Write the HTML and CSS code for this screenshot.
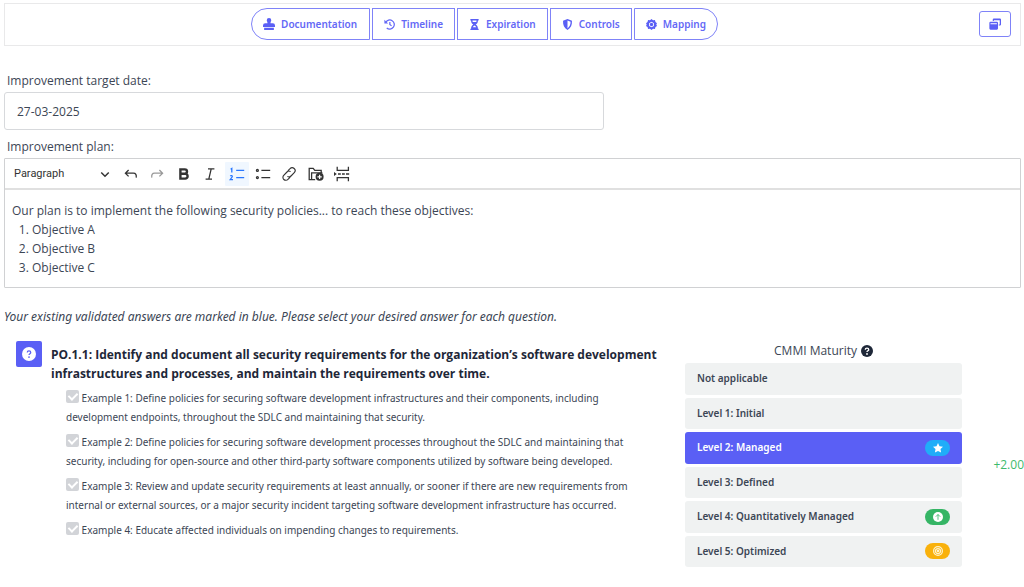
FILE: index.html
```html
<!DOCTYPE html>
<html lang="en">
<head>
<meta charset="utf-8">
<meta name="viewport" content="width=device-width, initial-scale=1">
<title>Improvement plan</title>
<link rel="stylesheet" href="styles.css">
</head>
<body>
<header class="topbar">
  <nav class="tabs" aria-label="Sections">
    <button class="tab" type="button"><svg class="icon" viewBox="0 0 16 16"><path d="M8 0a3 3 0 0 1 3 3c0 1.500-1 2-1 4h3a3 3 0 0 1 3 3v2H0v-2a3 3 0 0 1 3-3h3c0-2-1-2.500-1-4a3 3 0 0 1 3-3zM1.500 13h13v3h-13z"/></svg>Documentation</button>
    <button class="tab" type="button"><svg class="icon line" viewBox="0 0 16 16"><path d="M2.500 5A6.600 6.600 0 1 1 4 13M8.500 4.500V8l2.500 2" stroke-width="1.800"/><path d="M.5 1v5.500H6z" fill="currentColor" stroke="none"/></svg>Timeline</button>
    <button class="tab" type="button"><svg class="icon" viewBox="0 0 16 16"><path fill-rule="evenodd" d="M2 0h12v2h-1c0 3-1 4.500-3.200 6 2.200 1.500 3.200 3 3.200 6h1v2H2v-2h1c0-3 1-4.500 3.200-6C4 6.500 3 5 3 2H2zM5 2c0 1 .2 1.800.6 2.500h4.800C10.800 3.800 11 3 11 2zM8 9.300c-1.200.7-2 1.500-2.500 2.700h5C10 10.800 9.200 10 8 9.300z"/></svg>Expiration</button>
    <button class="tab" type="button"><svg class="icon" viewBox="0 0 16 16"><path fill-rule="evenodd" d="M8 0l6.500 2.700c.3 6-1.500 10.500-6.500 13.300C3 13.200 1.200 8.700 1.500 2.700zm0 2.200v11.500c3.200-2.200 4.500-5.200 4.500-9.600z"/></svg>Controls</button>
    <button class="tab" type="button"><svg class="icon" viewBox="0 0 16 16"><path fill-rule="evenodd" d="M8 0l2.200 1.800 2.800-.3.800 2.700L16 6l-1 2 1 2-2.200 1.800-.8 2.700-2.800-.3L8 16l-2.200-1.800-2.800.3-.8-2.700L0 10l1-2-1-2 2.200-1.800.8-2.700 2.800.3zm0 4L4.500 6v4L8 12l3.500-2V6zm0 1.300L10.300 6.700v2.600L8 10.700 5.700 9.300V6.700z"/></svg>Mapping</button>
  </nav>
  <button class="copy" type="button" aria-label="Show windows"><svg class="icon" viewBox="0 0 16 16"><path fill-rule="evenodd" d="M6.500.5h8A1.500 1.500 0 0 1 16 2v6.500a1.500 1.500 0 0 1-1.500 1.500H13V8.500h1.300V3H6.500v1H5V2A1.500 1.500 0 0 1 6.500.5zM2 5h8.500a1.500 1.500 0 0 1 1.500 1.500v7.500a1.500 1.500 0 0 1-1.500 1.500H2A1.500 1.500 0 0 1 .5 14V6.500A1.500 1.500 0 0 1 2 5zm0 2v1.300h8.500V7z"/></svg></button>
</header>
<main>
  <section class="plan">
    <label class="label" for="target">Improvement target date:</label>
    <input class="date" id="target" type="text" value="27-03-2025">
    <label class="label" for="plan">Improvement plan:</label>
    <div class="editor">
      <div class="toolbar" role="toolbar" aria-label="Editor toolbar">
        <div class="style">
          <select class="style-select" aria-label="Text style"><option>Paragraph</option></select>
          <svg class="chevron" viewBox="0 0 8 8"><path d="M1.500 3l2.500 2.500 2.500-2.500"/></svg>
        </div>
        <div class="tools">
          <button class="tool" type="button" aria-label="Undo"><svg viewBox="0 0 20 20"><path d="M7 5L3 9l4 4M3 9h10c3 0 4 2 3.500 5.500"/></svg></button>
          <button class="tool muted" type="button" aria-label="Redo"><svg viewBox="0 0 20 20"><path d="M13 5l4 4-4 4M17 9H7c-3 0-4 2-3.500 5.500"/></svg></button>
          <button class="tool" type="button" aria-label="Bold"><svg viewBox="0 0 20 20"><path d="M5.500 4.200h5.500a2.700 2.700 0 0 1 0 5.500H5.500zM5.500 9.800h6a2.900 2.900 0 0 1 0 6h-6z" stroke-width="3"/></svg></button>
          <button class="tool" type="button" aria-label="Italic"><svg viewBox="0 0 20 20"><path d="M7.500 3.500h8M4.500 16.500h8M11.500 3.500l-3 13"/></svg></button>
          <button class="tool active" type="button" aria-label="Numbered list"><svg viewBox="0 0 20 20"><path d="M9 5.500h10M9 14.500h10M2 4l1.500-1v5M1.500 12.500c1-1 3-.5 2.500 1L1.500 17h3.500"/></svg></button>
          <button class="tool" type="button" aria-label="Bulleted list"><svg viewBox="0 0 20 20"><path d="M8 5.500h11M8 14.500h11"/><circle cx="3" cy="5.500" r="1.200"/><circle cx="3" cy="14.500" r="1.200"/></svg></button>
          <button class="tool" type="button" aria-label="Link"><svg viewBox="0 0 20 20"><path d="M8.500 6l2.800-2.700a3.600 3.600 0 0 1 5.300 5L12.500 12.500a3.500 3.500 0 0 1-4.500.5M11.500 14l-2.800 2.700a3.600 3.600 0 0 1-5.300-5L7.500 7.500A3.500 3.500 0 0 1 12 7" stroke-width="1.400"/></svg></button>
          <button class="tool" type="button" aria-label="Insert file"><svg viewBox="0 0 20 20"><path d="M9 17H1.500V3h5l2 2.500h8V8M4.500 17V8.500H18"/><circle cx="14.500" cy="13.500" r="5" fill="currentColor" stroke="none"/><path d="M14.500 10.800v5.400M11.800 13.500h5.400" stroke="#fff" stroke-width="1.500"/></svg></button>
          <button class="tool" type="button" aria-label="Page break"><svg viewBox="0 0 20 20"><path d="M4 1v4.500h14V1M4 19v-4.500h14V19M5 10h3.500M10 10h3.500M15 10h4"/><path d="M0 7.500L3.500 10 0 12.500z" fill="currentColor" stroke="none"/></svg></button>
        </div>
      </div>
      <div class="content" id="plan" contenteditable="true" role="textbox" aria-label="Improvement plan">
        <p>Our plan is to implement the following security policies... to reach these objectives:</p>
        <ol><li>Objective A</li><li>Objective B</li><li>Objective C</li></ol>
      </div>
    </div>
  </section>
  <p class="hint">Your existing validated answers are marked in blue. Please select your desired answer for each question.</p>
  <section class="question">
    <button class="help" type="button" aria-label="Help"><svg viewBox="0 0 16 16"><circle cx="8" cy="8" r="8" fill="#fff"/><path d="M6 6.200C6 3.800 10 3.800 10 6.200 10 7.600 8 7.600 8 9.200" fill="none" stroke="#5a5ff5" stroke-width="1.400"/><circle cx="8" cy="11.500" r="1" fill="#5a5ff5"/></svg></button>
    <div class="detail">
      <h2 class="title">PO.1.1: Identify and document all security requirements for the organization’s software development infrastructures and processes, and maintain the requirements over time.</h2>
      <div class="examples">
        <label class="example"><input class="check" type="checkbox" checked disabled> Example 1: Define policies for securing software development infrastructures and their components, including development endpoints, throughout the SDLC and maintaining that security.</label>
        <label class="example"><input class="check" type="checkbox" checked disabled> Example 2: Define policies for securing software development processes throughout the SDLC and maintaining that security, including for open-source and other third-party software components utilized by software being developed.</label>
        <label class="example"><input class="check" type="checkbox" checked disabled> Example 3: Review and update security requirements at least annually, or sooner if there are new requirements from internal or external sources, or a major security incident targeting software development infrastructure has occurred.</label>
        <label class="example"><input class="check" type="checkbox" checked disabled> Example 4: Educate affected individuals on impending changes to requirements.</label>
      </div>
    </div>
    <div class="maturity">
      <div class="maturity-title">CMMI Maturity <svg class="info" viewBox="0 0 16 16"><circle cx="8" cy="8" r="8" fill="#1e2738"/><path d="M5.700 6.200C5.700 3.400 10.300 3.400 10.300 6.200 10.300 7.800 8 7.600 8 9.400" fill="none" stroke="#fff" stroke-width="1.800"/><circle cx="8" cy="12" r="1.200" fill="#fff"/></svg></div>
      <div class="levels">
        <button class="level" type="button">Not applicable</button>
        <button class="level" type="button">Level 1: Initial</button>
        <button class="level selected" type="button">Level 2: Managed<span class="badge blue"><svg viewBox="0 0 16 16"><path fill="#fff" d="M8 0l2.400 5 5.600.8-4 3.900.9 5.600L8 12.700l-4.900 2.600.9-5.600-4-3.900L5.600 5z"/></svg></span></button>
        <button class="level" type="button">Level 3: Defined</button>
        <button class="level" type="button">Level 4: Quantitatively Managed<span class="badge green"><svg viewBox="0 0 16 16"><circle cx="8" cy="8" r="8" fill="#fff"/><path d="M8 12.500V4M4.500 7.500L8 4l3.500 3.500" fill="none" stroke="#35b565" stroke-width="1.300"/></svg></span></button>
        <button class="level" type="button">Level 5: Optimized<span class="badge amber"><svg viewBox="0 0 16 16" fill="none" stroke="#fff2c9"><circle cx="8" cy="8" r="7" stroke-width="2"/><circle cx="8" cy="8" r="4" stroke-width="2"/><circle cx="8" cy="8" r="1" stroke-width="2"/></svg></span></button>
      </div>
    </div>
    <div class="score">+2.00</div>
  </section>
</main>
</body>
</html>
```
FILE: styles.css
```css
* { box-sizing: border-box; }
body {
  margin: 0;
  padding: 3px 0 16px 4px;
  background: #fff;
  color: #3c4655;
  font: 12px/19px "Open Sans", "Noto Sans", sans-serif;
}
button, input, select { margin: 0; font: inherit; color: inherit; }
p, h2, ol { margin: 0; }
svg { display: block; }

.topbar {
  display: grid;
  grid-template-columns: 1fr auto 1fr;
  align-items: center;
  margin-right: 3px;
  padding: 4px 9px 5px;
  border: 1px solid #e9e9ea;
}
.tabs { display: flex; grid-column: 2; gap: 2px; margin-right: 56px; }
.tab {
  display: flex;
  align-items: center;
  gap: 6px;
  height: 32px;
  padding: 0 11px;
  border: 1px solid #7f83f8;
  background: #fff;
  color: #6468f6;
  font-family: "Noto Sans", sans-serif;
  font-size: 10px;
  font-weight: 600;
}
.tab:first-child { padding: 0 12px 0 11px; border-radius: 16px 0 0 16px; }
.tab:last-child { border-radius: 0 16px 16px 0; }
.icon { width: 12px; height: 12px; fill: #5a5ff5; }
.tab + .tab .icon { width: 11px; height: 11px; }
.icon.line { fill: none; stroke: currentColor; }
.copy {
  display: grid;
  place-items: center;
  justify-self: end;
  width: 32px;
  height: 26px;
  padding: 0;
  border: 1px solid #7f83f8;
  border-radius: 3px;
  background: #fff;
}

.plan { display: flex; flex-direction: column; margin-right: 3px; padding-top: 22px; }
.label { padding: 3px 3px 2px; line-height: 19px; }
.date {
  width: 59%;
  height: 38px;
  padding: 0 12px;
  border: 1px solid #d7d9dc;
  border-radius: 3px;
  background: #fff;
}
.date + .label { padding-top: 7px; }
.editor { border: 1px solid #d0d1d3; border-radius: 1px; }
.toolbar {
  display: flex;
  align-items: center;
  gap: 8px;
  padding: 3px 9px 2px;
  border-bottom: 2px solid #e0e0e0;
}
.style { display: flex; align-items: center; justify-content: space-between; width: 97px; color: #333; }
.style-select {
  appearance: none;
  flex: 1;
  padding: 0;
  border: 0;
  background: none;
  font: 11px/20px Roboto, "Liberation Sans", sans-serif;
}
.chevron { width: 12px; height: 12px; fill: none; stroke: #333; }
.tools { display: flex; justify-content: space-between; width: 235px; }
.tool {
  display: grid;
  place-items: center;
  width: 24px;
  height: 24px;
  padding: 0;
  border: 0;
  border-radius: 1px;
  background: none;
  color: #333;
}
.tool svg { width: 16px; height: 16px; fill: none; stroke: currentColor; stroke-width: 1.6; }
.tool.muted { color: #999; }
.tool.active { background: #f0f7ff; color: #2977ff; }
.content { padding: 11px 7px 10px; outline: 0; }
.content ol { padding-left: 20px; }

.hint { padding: 19px 0 15px; font-family: "Noto Sans", sans-serif; font-style: italic; }

.question { display: grid; grid-template-columns: 26px minmax(0, 1fr) 277px 62px; padding-left: 12px; }
.help {
  display: grid;
  place-items: center;
  width: 26px;
  height: 26px;
  padding: 0;
  border: 0;
  border-radius: 2px;
  background: #5a5ff5;
}
.help svg { width: 14px; height: 14px; }
.detail { padding: 4px 20px 0 9px; }
.title { color: #1e2738; font-size: 12px; font-weight: 700; line-height: 19px; }
.examples { display: flex; flex-direction: column; gap: 6px; padding: 6px 12px 0 15px; }
.example { font-family: "Noto Sans", sans-serif; font-size: 10px; line-height: 19px; }
.check {
  appearance: none;
  display: inline-grid;
  place-items: center;
  width: 13px;
  height: 13px;
  border-radius: 2px;
  background: #d2d4d8;
  vertical-align: 2px;
}
.check::before {
  content: "";
  width: 4px;
  height: 7px;
  margin-bottom: 2px;
  border: solid #fff;
  border-width: 0 2px 2px 0;
  transform: rotate(45deg);
}

.maturity-title { display: flex; align-items: center; justify-content: center; gap: 4px; padding-bottom: 3px; }
.info { width: 12px; height: 12px; }
.levels { display: grid; grid-auto-rows: 1fr; gap: 3px; min-height: 204px; }
.level {
  display: flex;
  align-items: center;
  justify-content: space-between;
  padding: 0 12px;
  border: 0;
  border-radius: 3px;
  background: #f0f2f2;
  font-family: "Noto Sans", sans-serif;
  font-size: 10px;
  font-weight: 600;
  text-align: left;
}
.level.selected { background: #5a5ff5; color: #fff; }
.badge { display: grid; place-items: center; width: 25px; height: 16px; border-radius: 8px; }
.badge svg { width: 10px; height: 10px; }
.blue { background: #20adf8; }
.green { background: #35b565; }
.amber { background: #f9b10b; }
.score { align-self: center; padding-top: 20px; color: #3dbb6c; text-align: right; }
```
